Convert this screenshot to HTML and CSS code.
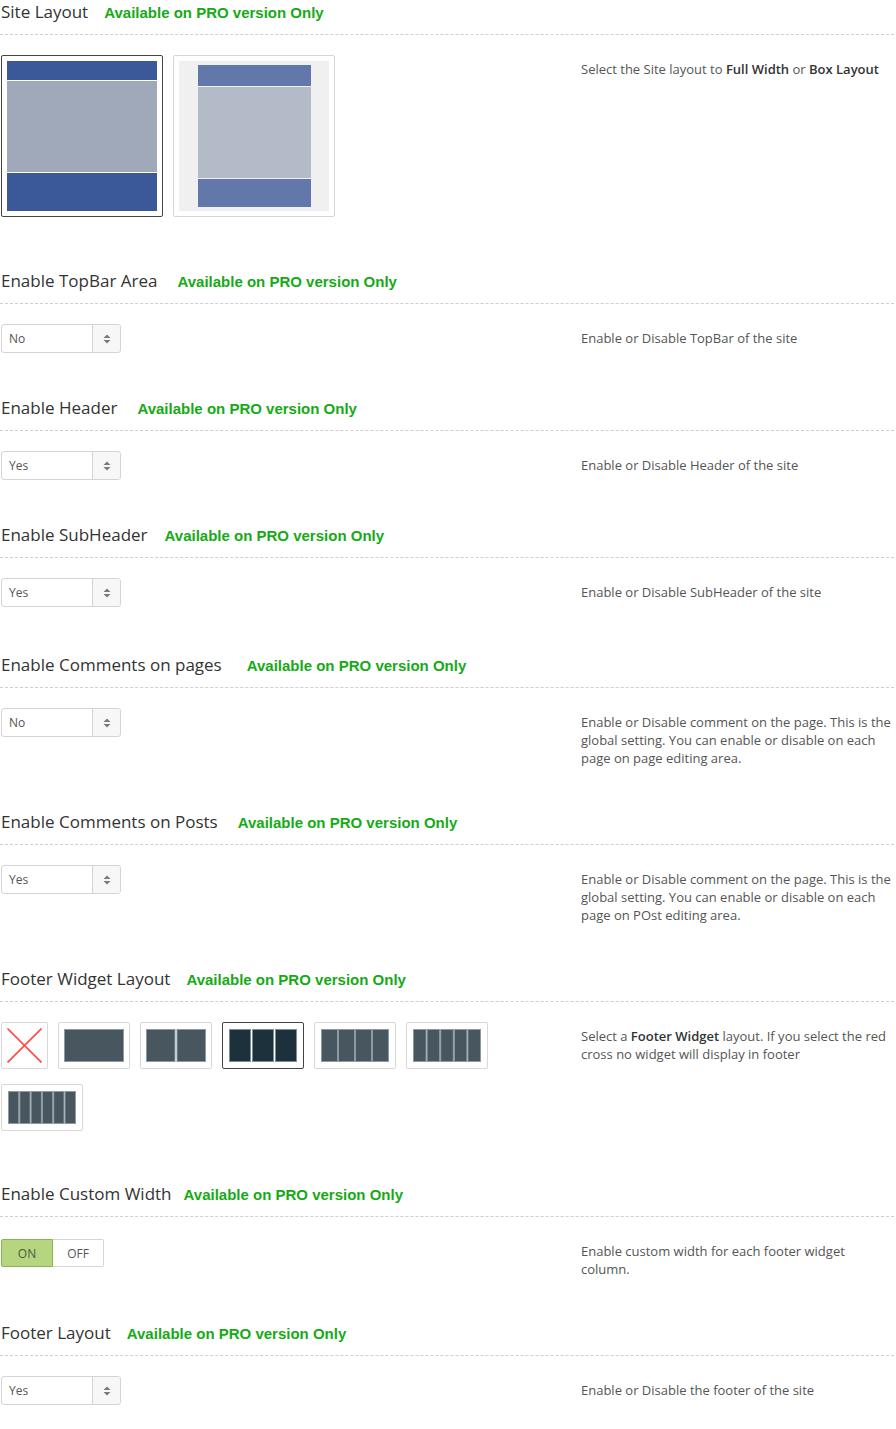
FILE: index.html
```html
<!DOCTYPE html>
<html>
<head>
<meta charset="utf-8">
<link rel="stylesheet" href="styles.css">
</head>
<body>
<div class="page">

  <section class="section">
    <div class="sec-head"><span class="title">Site Layout</span><span class="pro">Available on PRO version Only</span></div>
    <div class="sec-body">
      <div class="field">
        <div class="img-row">
          <div class="img-opt selected">
            <svg width="150" height="150" viewBox="0 0 150 150">
              <rect x="0" y="0" width="150" height="19" fill="#3b5898"/>
              <rect x="0" y="20" width="150" height="91" fill="#a0a9ba"/>
              <rect x="0" y="112" width="150" height="38" fill="#3b5898"/>
            </svg>
          </div>
          <div class="img-opt">
            <svg width="150" height="150" viewBox="0 0 150 150">
              <rect x="0" y="0" width="150" height="150" fill="#f0f0f0"/>
              <rect x="19" y="4" width="113" height="21" fill="#6378aa"/>
              <rect x="19" y="26" width="113" height="91" fill="#b4bbc8"/>
              <rect x="19" y="118" width="113" height="28" fill="#6378aa"/>
            </svg>
          </div>
        </div>
      </div>
      <div class="desc">Select the Site layout to <b>Full Width</b> or <b>Box Layout</b></div>
    </div>
  </section>

  <section class="section">
    <div class="sec-head"><span class="title">Enable TopBar Area</span><span class="pro gap-l">Available on PRO version Only</span></div>
    <div class="sec-body">
      <div class="field">
        <div class="select"><span class="sel-val">No</span><span class="sel-arrow"><svg width="8" height="10" viewBox="0 0 8 10"><path d="M4 0.5 L7.5 4 H0.5 Z M4 9.5 L7.5 6 H0.5 Z" fill="#7a7a7a"/></svg></span></div>
      </div>
      <div class="desc">Enable or Disable TopBar of the site</div>
    </div>
  </section>

  <section class="section">
    <div class="sec-head"><span class="title">Enable Header</span><span class="pro gap-l">Available on PRO version Only</span></div>
    <div class="sec-body">
      <div class="field">
        <div class="select"><span class="sel-val">Yes</span><span class="sel-arrow"><svg width="8" height="10" viewBox="0 0 8 10"><path d="M4 0.5 L7.5 4 H0.5 Z M4 9.5 L7.5 6 H0.5 Z" fill="#7a7a7a"/></svg></span></div>
      </div>
      <div class="desc">Enable or Disable Header of the site</div>
    </div>
  </section>

  <section class="section sec-extra">
    <div class="sec-head"><span class="title">Enable SubHeader</span><span class="pro gap-m">Available on PRO version Only</span></div>
    <div class="sec-body">
      <div class="field">
        <div class="select"><span class="sel-val">Yes</span><span class="sel-arrow"><svg width="8" height="10" viewBox="0 0 8 10"><path d="M4 0.5 L7.5 4 H0.5 Z M4 9.5 L7.5 6 H0.5 Z" fill="#7a7a7a"/></svg></span></div>
      </div>
      <div class="desc">Enable or Disable SubHeader of the site</div>
    </div>
  </section>

  <section class="section">
    <div class="sec-head"><span class="title">Enable Comments on pages</span><span class="pro gap-xl">Available on PRO version Only</span></div>
    <div class="sec-body">
      <div class="field">
        <div class="select"><span class="sel-val">No</span><span class="sel-arrow"><svg width="8" height="10" viewBox="0 0 8 10"><path d="M4 0.5 L7.5 4 H0.5 Z M4 9.5 L7.5 6 H0.5 Z" fill="#7a7a7a"/></svg></span></div>
      </div>
      <div class="desc">Enable or Disable comment on the page. This is the global setting. You can enable or disable on each page on page editing area.</div>
    </div>
  </section>

  <section class="section">
    <div class="sec-head"><span class="title">Enable Comments on Posts</span><span class="pro gap-l">Available on PRO version Only</span></div>
    <div class="sec-body">
      <div class="field">
        <div class="select"><span class="sel-val">Yes</span><span class="sel-arrow"><svg width="8" height="10" viewBox="0 0 8 10"><path d="M4 0.5 L7.5 4 H0.5 Z M4 9.5 L7.5 6 H0.5 Z" fill="#7a7a7a"/></svg></span></div>
      </div>
      <div class="desc">Enable or Disable comment on the page. This is the global setting. You can enable or disable on each page on POst editing area.</div>
    </div>
  </section>

  <section class="section">
    <div class="sec-head"><span class="title">Footer Widget Layout</span><span class="pro">Available on PRO version Only</span></div>
    <div class="sec-body">
      <div class="field">
        <div class="widget-row">
          <div class="w-opt w-sm">
            <svg width="35" height="35" viewBox="0 0 35 35"><path d="M0.5 0.5 L34.5 34.5 M34.5 0.5 L0.5 34.5" stroke="#ff4a4a" stroke-width="1.6"/></svg>
          </div>
          <div class="w-opt w-sm">
            <svg width="60" height="33" viewBox="0 0 60 33"><rect x="0.5" y="0.5" width="59" height="32" fill="#48575f" stroke="#8d9aa1"/></svg>
          </div>
          <div class="w-opt w-sm">
            <svg width="60" height="33" viewBox="0 0 60 33"><rect x="0.5" y="0.5" width="28.5" height="32" fill="#48575f" stroke="#8d9aa1"/><rect x="31" y="0.5" width="28.5" height="32" fill="#48575f" stroke="#8d9aa1"/></svg>
          </div>
          <div class="w-opt selected">
            <svg width="68" height="33" viewBox="0 0 68 33"><rect x="0.5" y="0.5" width="21" height="32" fill="#1c313c" stroke="#7e8c94"/><rect x="23.5" y="0.5" width="21" height="32" fill="#1c313c" stroke="#7e8c94"/><rect x="46.5" y="0.5" width="21" height="32" fill="#1c313c" stroke="#7e8c94"/></svg>
          </div>
          <div class="w-opt">
            <svg width="68" height="33" viewBox="0 0 68 33"><rect x="0.5" y="0.5" width="16" height="32" fill="#48575f" stroke="#8d9aa1"/><rect x="17.5" y="0.5" width="16" height="32" fill="#48575f" stroke="#8d9aa1"/><rect x="34.5" y="0.5" width="16" height="32" fill="#48575f" stroke="#8d9aa1"/><rect x="51.5" y="0.5" width="16" height="32" fill="#48575f" stroke="#8d9aa1"/></svg>
          </div>
          <div class="w-opt">
            <svg width="68" height="33" viewBox="0 0 68 33"><rect x="0.5" y="0.5" width="12.6" height="32" fill="#48575f" stroke="#8d9aa1"/><rect x="14.1" y="0.5" width="12.6" height="32" fill="#48575f" stroke="#8d9aa1"/><rect x="27.7" y="0.5" width="12.6" height="32" fill="#48575f" stroke="#8d9aa1"/><rect x="41.3" y="0.5" width="12.6" height="32" fill="#48575f" stroke="#8d9aa1"/><rect x="54.9" y="0.5" width="12.6" height="32" fill="#48575f" stroke="#8d9aa1"/></svg>
          </div>
          <div class="w-opt">
            <svg width="68" height="33" viewBox="0 0 68 33"><rect x="0.5" y="0.5" width="10.3" height="32" fill="#48575f" stroke="#8d9aa1"/><rect x="11.8" y="0.5" width="10.3" height="32" fill="#48575f" stroke="#8d9aa1"/><rect x="23.1" y="0.5" width="10.3" height="32" fill="#48575f" stroke="#8d9aa1"/><rect x="34.4" y="0.5" width="10.3" height="32" fill="#48575f" stroke="#8d9aa1"/><rect x="45.7" y="0.5" width="10.3" height="32" fill="#48575f" stroke="#8d9aa1"/><rect x="57" y="0.5" width="10.5" height="32" fill="#48575f" stroke="#8d9aa1"/></svg>
          </div>
        </div>
      </div>
      <div class="desc">Select a <b>Footer Widget</b> layout. If you select the red cross no widget will display in footer</div>
    </div>
  </section>

  <section class="section">
    <div class="sec-head"><span class="title">Enable Custom Width</span><span class="pro gap-s">Available on PRO version Only</span></div>
    <div class="sec-body">
      <div class="field">
        <div class="toggle"><span class="tg on">ON</span><span class="tg off">OFF</span></div>
      </div>
      <div class="desc">Enable custom width for each footer widget column.</div>
    </div>
  </section>

  <section class="section">
    <div class="sec-head"><span class="title">Footer Layout</span><span class="pro">Available on PRO version Only</span></div>
    <div class="sec-body">
      <div class="field">
        <div class="select"><span class="sel-val">Yes</span><span class="sel-arrow"><svg width="8" height="10" viewBox="0 0 8 10"><path d="M4 0.5 L7.5 4 H0.5 Z M4 9.5 L7.5 6 H0.5 Z" fill="#7a7a7a"/></svg></span></div>
      </div>
      <div class="desc">Enable or Disable the footer of the site</div>
    </div>
  </section>

</div>
</body>
</html>
```

FILE: styles.css
```css
html, body {
  margin: 0;
  padding: 0;
  background: #fff;
}

.page {
  width: 894px;
  font-family: "Open Sans", "DejaVu Sans", sans-serif;
  color: #555;
}

.section {
  padding-bottom: 43px;
}

.sec-extra {
  padding-bottom: 46px;
}

.sec-head {
  display: flex;
  align-items: baseline;
  height: 24px;
  line-height: 24px;
  padding: 0 0 10px 1px;
  border-bottom: 1px dashed #cfcfcf;
}

.title {
  font-size: 17px;
  color: #333;
}

.pro {
  margin-left: 16px;
  font-family: "Liberation Sans", Arial, sans-serif;
  font-weight: bold;
  font-size: 15px;
  color: #16aa16;
}

.pro.gap-s { margin-left: 12px; }
.pro.gap-m { margin-left: 17px; }
.pro.gap-l { margin-left: 20px; }
.pro.gap-xl { margin-left: 25px; }

.sec-body {
  display: grid;
  grid-template-columns: 581px 1fr;
  padding-top: 20px;
}

.field {
  padding-left: 1px;
}

.desc {
  padding-top: 5px;
  font-size: 13px;
  line-height: 18px;
  color: #555;
}

.desc b {
  font-weight: 600;
  color: #333;
}

/* Site layout images */
.img-row {
  display: flex;
  gap: 10px;
  margin-bottom: 9px;
}

.img-opt {
  display: flex;
  padding: 5px;
  border: 1px solid #d6d6d6;
  border-radius: 2px;
}

.img-opt.selected {
  border-color: #444;
}

.img-opt svg {
  display: block;
}

/* Selects */
.select {
  display: flex;
  width: 118px;
  height: 27px;
  border: 1px solid #d4d4d4;
  border-radius: 3px;
  background: #fff;
}

.sel-val {
  flex: 1;
  padding-left: 7px;
  font-size: 12px;
  line-height: 28px;
  color: #555;
  border-right: 1px solid #d4d4d4;
}

.sel-arrow {
  width: 27px;
  display: flex;
  align-items: center;
  justify-content: center;
  background: #f7f7f7;
  border-radius: 0 3px 3px 0;
}

.sel-arrow svg {
  display: block;
}

/* Footer widget options */
.widget-row {
  display: flex;
  flex-wrap: wrap;
  column-gap: 10px;
  row-gap: 15px;
  width: 500px;
  margin-bottom: 8px;
}

.w-opt {
  display: flex;
  align-items: center;
  justify-content: center;
  height: 45px;
  padding: 0 6px;
  border: 1px solid #d8d8d8;
  border-radius: 2px;
}

.w-opt.w-sm {
  padding: 0 5px;
}

.w-opt.selected {
  border-color: #444;
}

.w-opt svg {
  display: block;
}

/* Toggle */
.toggle {
  display: inline-flex;
  margin-top: 2px;
  height: 28px;
}

.tg {
  display: flex;
  align-items: center;
  justify-content: center;
  width: 51px;
  font-size: 12px;
  box-sizing: border-box;
}

.tg.on {
  background: #b5d67e;
  border: 1px solid #8cb155;
  border-radius: 2px 0 0 2px;
  color: #4d5a40;
  width: 52px;
}

.tg.off {
  border: 1px solid #d6d6d6;
  border-left: none;
  border-radius: 0 2px 2px 0;
  color: #555;
}
```
